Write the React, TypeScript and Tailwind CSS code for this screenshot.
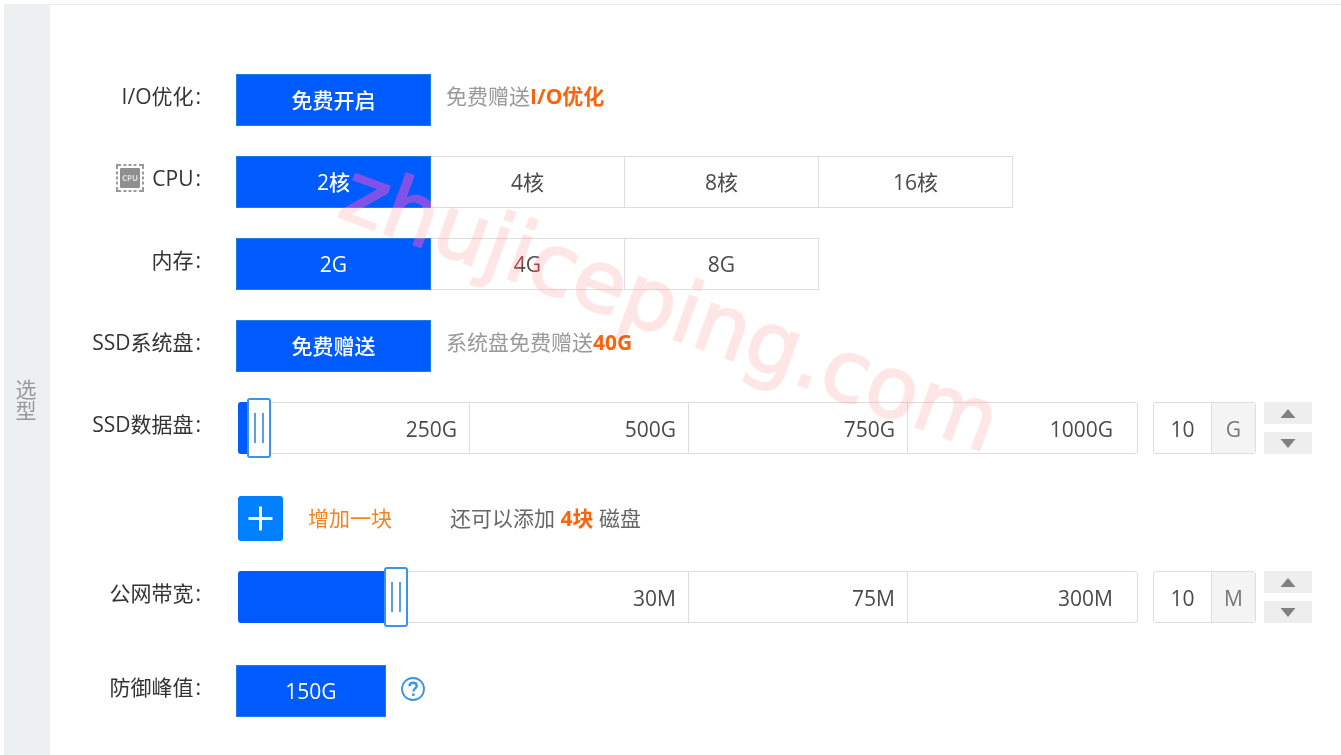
import { useState, type ReactNode } from "react";
import { clsx } from "clsx";

type Stop = { value: number; at: number };

const DISK_STOPS: Stop[] = [
  { value: 0, at: 0 },
  { value: 250, at: 0.258 },
  { value: 500, at: 0.501 },
  { value: 750, at: 0.744 },
  { value: 1000, at: 1 },
];

const BANDWIDTH_STOPS: Stop[] = [
  { value: 0, at: 0 },
  { value: 30, at: 0.501 },
  { value: 75, at: 0.744 },
  { value: 300, at: 1 },
];

function toPosition(stops: Stop[], value: number) {
  for (let i = 1; i < stops.length; i++) {
    const a = stops[i - 1];
    const b = stops[i];
    if (value <= b.value) return a.at + ((value - a.value) / (b.value - a.value)) * (b.at - a.at);
  }
  return 1;
}

function toValue(stops: Stop[], position: number) {
  for (let i = 1; i < stops.length; i++) {
    const a = stops[i - 1];
    const b = stops[i];
    if (position <= b.at) return Math.round(a.value + ((position - a.at) / (b.at - a.at)) * (b.value - a.value));
  }
  return stops[stops.length - 1].value;
}

function Row({ label, icon, htmlFor, children }: { label: string; icon?: ReactNode; htmlFor?: string; children: ReactNode }) {
  const Tag = htmlFor ? "label" : "div";
  return (
    <div className="flex items-start gap-[35px]">
      <Tag htmlFor={htmlFor} className="flex h-11 w-[151px] shrink-0 items-center justify-end gap-2 whitespace-nowrap text-[#333]">
        {icon}
        <span>
          {label}
          <span className="pl-0.5">:</span>
        </span>
      </Tag>
      <div className="flex min-w-0 flex-1 items-start">{children}</div>
    </div>
  );
}

function Choices({ name, options }: { name: string; options: string[] }) {
  const [selected, setSelected] = useState(options[0]);
  return (
    <div role="group" aria-label={name} className="flex">
      {options.map((option, i) => (
        <button
          key={option}
          type="button"
          aria-pressed={option === selected}
          onClick={() => setSelected(option)}
          className={clsx(
            "h-[52px] w-[195px] border text-center",
            i > 0 && "-ml-px",
            option === selected ? "relative border-[#1a7fe0] bg-[#005bff] font-medium text-white" : "border-[#ddd] bg-white text-[#4a4a4a]",
          )}
        >
          {option}
        </button>
      ))}
    </div>
  );
}

function Hint({ children, strong }: { children: ReactNode; strong: string }) {
  return (
    <p className="flex h-11 items-center pl-[15px] text-[#999]">
      {children}
      <strong className="font-bold text-[#f9640f]">{strong}</strong>
    </p>
  );
}

function Stepper({ down, label, onClick }: { down?: boolean; label: string; onClick: () => void }) {
  return (
    <button type="button" aria-label={label} onClick={onClick} className="flex h-[22px] w-12 items-center justify-center bg-[#eee]">
      <svg width="16" height="9" viewBox="0 0 16 9" className={clsx("fill-[#808080]", down && "rotate-180")}>
        <path d="M8 0 15.5 9H.5z" />
      </svg>
    </button>
  );
}

function AmountSlider({ id, name, unit, stops, columns }: { id: string; name: string; unit: string; stops: Stop[]; columns: string }) {
  const [value, setValue] = useState(10);
  const max = stops[stops.length - 1].value;
  const position = toPosition(stops, value);
  const left = `calc(${position} * (100% - 24px))`;
  const change = (next: number) => setValue(Math.min(max, Math.max(0, next || 0)));

  return (
    <div className="mb-3 ml-0.5 flex min-w-0 flex-1">
      <div className="relative h-[52px] min-w-0 flex-1">
        <div className={clsx("grid h-full rounded-[3px] border border-[#ddd] text-[#4a4a4a]", columns)}>
          {stops.slice(1).map((stop, i) => {
            const last = i === stops.length - 2;
            return (
              <span key={stop.value} className={clsx("flex items-center justify-end pt-[3px]", last ? "pr-6" : "border-r border-[#ddd] pr-3")}>
                {stop.value}
                {unit}
              </span>
            );
          })}
        </div>
        <div className="absolute inset-y-0 left-0 rounded-l-[3px] bg-[#005bff]" style={{ width: `calc(${left} + 4px)` }} />
        <div
          className="absolute -inset-y-1 flex w-6 items-center justify-center gap-[6px] rounded-[3px] border-2 border-[#3b93ec] bg-white"
          style={{ left }}
        >
          <i className="h-[30px] w-0.5 bg-[#5a9fe0]" />
          <i className="h-[30px] w-0.5 bg-[#5a9fe0]" />
        </div>
        <input
          id={id}
          type="range"
          min={0}
          max={1000}
          value={Math.round(position * 1000)}
          aria-valuetext={`${value}${unit}`}
          onChange={(e) => setValue(toValue(stops, Number(e.target.value) / 1000))}
          className="absolute inset-0 h-full w-full cursor-pointer opacity-0"
        />
      </div>
      <div className="ml-[15px] flex h-[52px] w-[103px] shrink-0 rounded-[3px] border border-[#ddd]">
        <input
          type="text"
          inputMode="numeric"
          aria-label={name}
          value={value}
          onChange={(e) => change(Number(e.target.value))}
          className="w-[57px] pt-0.5 text-center text-[#4a4a4a]"
        />
        <span className="flex flex-1 items-center justify-center border-l border-[#ddd] bg-[#f4f4f4] pt-[3px] text-[#777]">{unit}</span>
      </div>
      <div className="ml-2 flex shrink-0 flex-col gap-2">
        <Stepper label={`${name} +`} onClick={() => change(value + 10)} />
        <Stepper down label={`${name} -`} onClick={() => change(value - 10)} />
      </div>
    </div>
  );
}

function CpuIcon() {
  return (
    <svg width="28" height="28" viewBox="0 0 28 28" className="shrink-0">
      <path d="M1 5V1h4M23 1h4v4M27 23v4h-4M5 27H1v-4" fill="none" stroke="#999" strokeWidth="2" />
      <path
        d="M7.5 1h3M12.5 1h3M17.500 1h3M7.500 27h3M12.500 27h3M17.500 27h3M1 7.500v3M1 12.500v3M1 17.500v3M27 7.500v3M27 12.500v3M27 17.500v3"
        fill="none"
        stroke="#999"
        strokeWidth="2"
      />
      <rect x="4" y="4" width="20" height="20" rx="1" fill="#8f8f8f" />
      <text x="14" y="16.5" textAnchor="middle" fontSize="8" fontWeight="700" fill="#dcdcdc">
        CPU
      </text>
    </svg>
  );
}

function HelpIcon() {
  return (
    <svg width="24" height="24" viewBox="0 0 24 24" fill="none" stroke="currentColor">
      <circle cx="12" cy="12" r="11" strokeWidth="1.8" />
      <path d="M8.500 9.300c0-2.200 1.500-3.500 3.600-3.500s3.600 1.200 3.600 3.100c0 2.500-3.300 2.700-3.300 5.600" strokeWidth="2.400" />
      <path d="M12.300 16.400v2.500" strokeWidth="2.600" />
    </svg>
  );
}

export default function App() {
  return (
    <div className="relative flex min-h-screen overflow-hidden bg-white pt-1 pl-1 font-['Open_Sans','Noto_Sans_CJK_SC',sans-serif] text-[21px] leading-[21px]">
      <aside className="flex w-[46px] shrink-0 items-center justify-center bg-[#ecf0f1] pt-10 pr-0.5 text-[#999]">
        <span className="w-[21px]">选型</span>
      </aside>

      <main className="flex min-w-0 flex-1 flex-col gap-[30px] border-t border-[#e8e8e8] pt-[69px] pr-[29px] pb-9">
        <Row label="I/O优化">
          <Choices name="I/O优化" options={["免费开启"]} />
          <Hint strong="I/O优化">免费赠送</Hint>
        </Row>
        <Row label="CPU" icon={<CpuIcon />}>
          <Choices name="CPU" options={["2核", "4核", "8核", "16核"]} />
        </Row>
        <Row label="内存">
          <Choices name="内存" options={["2G", "4G", "8G"]} />
        </Row>
        <Row label="SSD系统盘">
          <Choices name="SSD系统盘" options={["免费赠送"]} />
          <Hint strong="40G">系统盘免费赠送</Hint>
        </Row>
        <Row label="SSD数据盘" htmlFor="disk">
          <AmountSlider id="disk" name="SSD数据盘" unit="G" stops={DISK_STOPS} columns="grid-cols-[231fr_219fr_219fr_229fr]" />
        </Row>
        <div className="flex items-center pl-[188px] text-[#666]">
          <button type="button" className="flex items-center gap-[25px] text-[#f5821f]">
            <span className="flex size-[45px] items-center justify-center rounded-[3px] bg-[#0080ff]">
              <svg width="45" height="45" viewBox="0 0 45 45" className="stroke-white">
                <path d="M10.500 22.500h24M22.500 10.500v24" strokeWidth="3" />
              </svg>
            </span>
            增加一块
          </button>
          <p className="pl-[58px]">
            还可以添加 <strong className="font-bold text-[#f9640f]">4块</strong> 磁盘
          </p>
        </div>
        <Row label="公网带宽" htmlFor="bandwidth">
          <AmountSlider id="bandwidth" name="公网带宽" unit="M" stops={BANDWIDTH_STOPS} columns="grid-cols-[450fr_219fr_229fr]" />
        </Row>
        <Row label="防御峰值">
          <button type="button" aria-pressed="true" className="h-[52px] w-[150px] border border-[#1a7fe0] bg-[#005bff] font-medium text-white">
            150G
          </button>
          <button type="button" aria-label="防御峰值" className="ml-[15px] flex h-12 items-center text-[#3b93ec]">
            <HelpIcon />
          </button>
        </Row>
      </main>

      <div className="pointer-events-none absolute top-[142px] left-[330px] text-[85px] leading-[88px] font-[DejaVu_Sans,sans-serif] [-webkit-text-stroke-width:2px] after:absolute after:top-0 after:left-0 after:origin-bottom-left after:rotate-20 after:whitespace-nowrap after:text-[#800000] after:mix-blend-screen after:content-['zhujiceping.com']">
        <span className="block origin-bottom-left rotate-20 whitespace-nowrap text-[#ffe6e6] mix-blend-multiply">zhujiceping.com</span>
      </div>
    </div>
  );
}
